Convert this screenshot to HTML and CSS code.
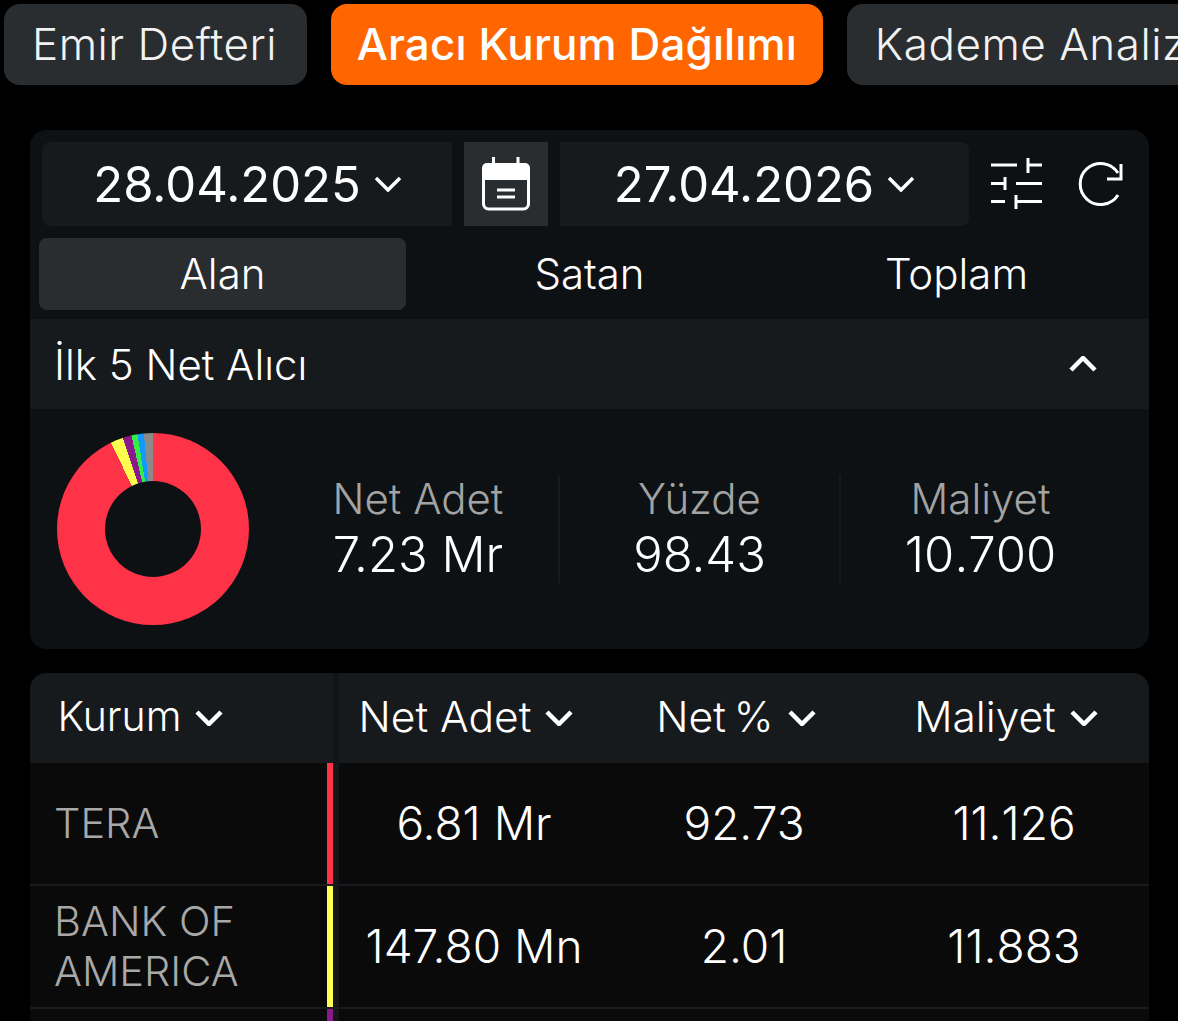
FILE: index.html
```html
<!DOCTYPE html>
<html lang="tr">
<head>
<meta charset="utf-8">
<title>Aracı Kurum Dağılımı</title>
<link rel="stylesheet" href="styles.css">
</head>
<body>
<nav class="tabs">
  <div class="tab">Emir Defteri</div>
  <div class="tab tab-active">Aracı Kurum Dağılımı</div>
  <div class="tab">Kademe Analizi</div>
</nav>

<section class="panel">
  <div class="date-row">
    <div class="date-box date-box-start"><span>28.04.2025</span>
      <svg class="chev-date" viewBox="0 0 28 16"><path d="M2 2l12 12L26 2"/></svg></div>
    <div class="cal-box">
      <svg class="cal-icon" viewBox="0 0 48 54">
        <path class="fill" d="M5 6h38a5 5 0 0 1 5 5v12H0V11a5 5 0 0 1 5-5z"/>
        <path d="M1.500 20v27a5 5 0 0 0 5 5h35a5 5 0 0 0 5-5V20"/>
        <path d="M11.500 0v7M36 0v7M15 33h18M15 40h18"/>
      </svg>
    </div>
    <div class="date-box date-box-end"><span>27.04.2026</span>
      <svg class="chev-date" viewBox="0 0 28 16"><path d="M2 2l12 12L26 2"/></svg></div>
    <div class="tools">
      <svg class="filter-icon" viewBox="0 0 52 52">
        <path d="M0 7h26M37 0v15M37 7h14M0 25.500h15M14 19v13M25 25.500h26M0 43.500h14M25 37v14M25 43.500h26"/>
      </svg>
      <svg class="refresh-icon" viewBox="0 0 46 46">
        <path d="M41 12A20.500 20.500 0 1 0 41 34M44 3v15H30"/>
      </svg>
    </div>
  </div>

  <div class="segments">
    <div class="segment segment-active">Alan</div>
    <div class="segment">Satan</div>
    <div class="segment">Toplam</div>
  </div>

  <div class="section-head">
    <span>İlk 5 Net Alıcı</span>
    <svg class="chev-up" viewBox="0 0 28 16"><path d="M2 14L14 2l12 12"/></svg>
  </div>

  <div class="summary">
    <div class="donut"><div class="donut-hole"></div></div>
    <div class="stats">
      <div class="stat"><div class="stat-label">Net Adet</div><div class="stat-value">7.23 Mr</div></div>
      <div class="stat"><div class="stat-label">Yüzde</div><div class="stat-value">98.43</div></div>
      <div class="stat"><div class="stat-label">Maliyet</div><div class="stat-value no-kern">10.700</div></div>
    </div>
  </div>
</section>

<section class="table">
  <div class="thead">
    <div class="th th-first">Kurum <svg class="chev-th" viewBox="0 0 28 16"><path d="M2 2l12 12L26 2"/></svg></div>
    <div class="th">Net Adet <svg class="chev-th" viewBox="0 0 28 16"><path d="M2 2l12 12L26 2"/></svg></div>
    <div class="th th-tight">Net % <svg class="chev-th" viewBox="0 0 28 16"><path d="M2 2l12 12L26 2"/></svg></div>
    <div class="th">Maliyet <svg class="chev-th" viewBox="0 0 28 16"><path d="M2 2l12 12L26 2"/></svg></div>
  </div>
  <div class="row">
    <div class="name"><span>TERA</span><i class="bar bar-red"></i></div>
    <div class="cell">6.81 Mr</div><div class="cell">92.73</div><div class="cell no-kern">11.126</div>
  </div>
  <div class="row">
    <div class="name"><span>BANK OF AMERICA</span><i class="bar bar-yellow"></i></div>
    <div class="cell">147.80 Mn</div><div class="cell">2.01</div><div class="cell no-kern">11.883</div>
  </div>
  <div class="row">
    <div class="name"><span></span><i class="bar bar-purple"></i></div>
    <div class="cell"></div><div class="cell"></div><div class="cell"></div>
  </div>
</section>
</body>
</html>
```

FILE: styles.css
```css
* { box-sizing: border-box; }
html, body { margin: 0; height: 100%; overflow: hidden; background: #000; }
body { font-family: Inter, "Noto Sans", sans-serif; color: #fff; width: 1178px; height: 1021px; }
svg { display: block; fill: none; stroke: #fff; }
.no-kern { font-kerning: none; }

.tabs { display: flex; gap: 24px; padding: 4px 0 0 4px; width: 1400px; }
.tab { flex: none; height: 81px; padding: 0 29.500px 0 28px; border-radius: 16px; background: #2a2d30; font-size: 44px; font-weight: 300; line-height: 81px; letter-spacing: 0.500px; color: #f2f2f2; white-space: nowrap; }
.tab-active { background: #ff6600; color: #fff; font-weight: 500; padding: 0 26px; letter-spacing: 0.100px; }

.panel { margin: 45px 29px 0 30px; height: 519px; background: #0d1114; border-radius: 16px; overflow: hidden; }

.date-row { display: flex; padding: 12px 0 0 12px; height: 108px; }
.date-box { width: 410px; height: 84px; background: #171a1d; border-radius: 8px 0 0 8px; display: flex; align-items: center; justify-content: center; font-size: 49px; font-weight: 400; gap: 13px; }
.date-box-start { padding-left: 1px; }
.date-box-end { width: 409px; border-radius: 0 8px 8px 0; }
.cal-box { width: 84px; height: 84px; margin: 0 12px; background: #2a2d30; display: flex; align-items: center; justify-content: center; }
.cal-icon { width: 48px; height: 54px; stroke-width: 3; }
.cal-icon .fill { fill: #fff; stroke: none; }
.chev-date { width: 28px; height: 16px; stroke-width: 3.500; flex: none; }

.tools { display: flex; align-items: center; padding-left: 22px; gap: 34px; height: 84px; }
.filter-icon { width: 52px; height: 52px; stroke-width: 3; }
.refresh-icon { width: 46px; height: 46px; stroke-width: 3; }

.segments { display: flex; padding-left: 9px; height: 72px; }
.segment { width: 367px; height: 72px; line-height: 72px; text-align: center; font-size: 42px; font-weight: 300; border-radius: 8px; }
.segment-active { background: #2a2d30; }

.section-head { margin-top: 9px; height: 90px; background: #171a1d; display: flex; align-items: center; justify-content: space-between; padding: 0 52px 0 24px; font-size: 42px; font-weight: 300; }
.chev-up { width: 28px; height: 16px; stroke-width: 4.500; }

.summary { display: flex; align-items: center; height: 240px; padding-left: 27px; }
.donut { width: 192px; height: 192px; border-radius: 50%; flex: none; display: flex; align-items: center; justify-content: center;
  background: conic-gradient(#ff3347 0deg 334deg, #ffff4d 334deg 341.700deg, #8a1a8c 341.700deg 347deg, #33ee44 347deg 350.600deg, #1199ff 350.600deg 354.500deg, #8a8a8a 354.500deg 360deg); }
.donut-hole { width: 96px; height: 96px; border-radius: 50%; background: #0d1114; }
.stats { display: grid; grid-template-columns: 280px 281px 281px; margin-left: 29px; }
.stat { text-align: center; border-left: 2px solid #171a1d; height: 108px; }
.stat:first-child { border-left: 0; }
.stat-label { font-size: 42px; font-weight: 300; color: #a3a3a3; line-height: 48px; }
.stat-value { font-size: 49px; font-weight: 300; line-height: 64px; }

.table { margin: 24px 29px 0 30px; border-radius: 16px 16px 0 0; overflow: hidden; }
.thead { display: grid; grid-template-columns: 309px repeat(3, 270px); height: 90px; background: #171a1d; }
.th { display: flex; align-items: center; justify-content: center; gap: 14px; padding: 0 16px 4px 0; font-size: 42.500px; font-weight: 300; }
.th-tight { word-spacing: -4px; }
.th-first { justify-content: flex-start; padding-left: 27.500px; border-right: 6px solid #121518; font-size: 41px; }
.chev-th { width: 28px; height: 16px; stroke-width: 4.500; margin-top: 4px; }

.row { display: grid; grid-template-columns: 309px repeat(3, 270px); height: 123px; background: #0a0a0a; border-bottom: 2px solid #191b1e; }
.name { display: flex; align-items: center; justify-content: space-between; padding: 0 0 2px 24px; border-right: 6px solid #141619; font-size: 41.500px; font-weight: 300; color: #a8a8a8; line-height: 50px; }
.name span { width: 240px; }
.bar { flex: none; width: 6px; align-self: stretch; margin-bottom: -2px; }
.bar-red { background: #ff3347; }
.bar-yellow { background: #ffff4d; }
.bar-purple { background: #8a1a8c; }
.cell { display: flex; align-items: center; justify-content: center; font-size: 46px; font-weight: 300; padding-bottom: 2px; }
```
